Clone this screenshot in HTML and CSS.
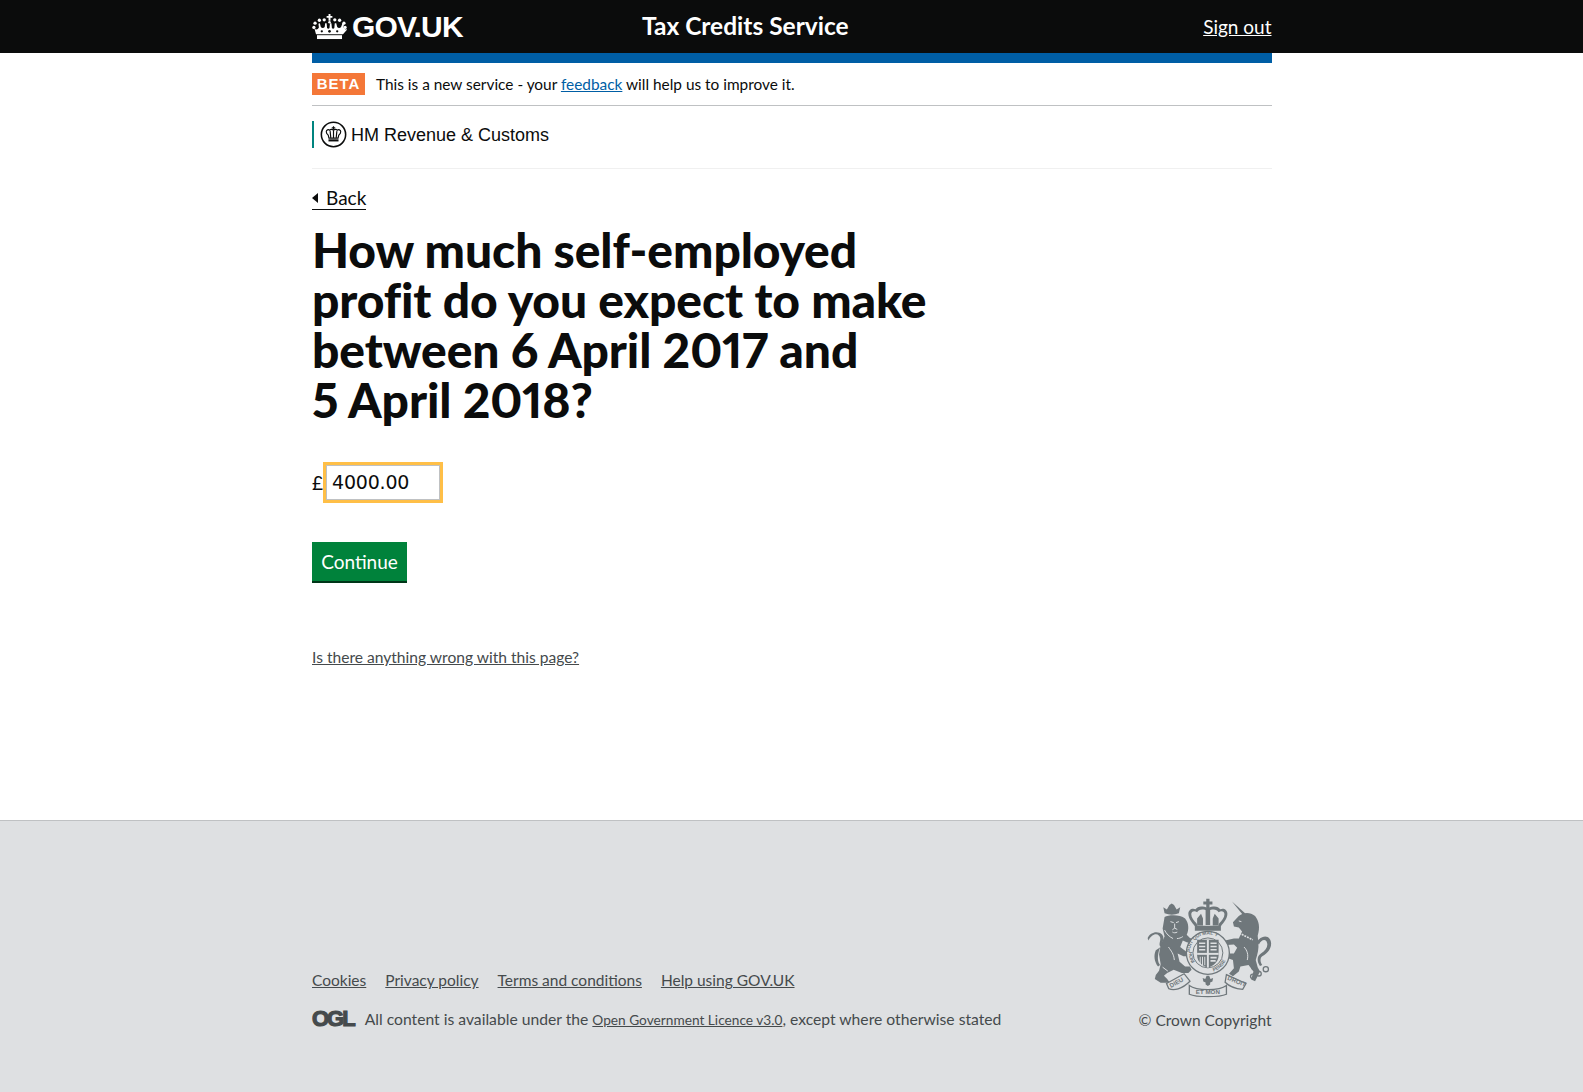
FILE: index.html
```html
<!DOCTYPE html>
<html lang="en">
<head>
  <meta charset="UTF-8">
  <title>Tax Credits Service - GOV.UK</title>
  <link rel="stylesheet" href="styles.css">
</head>
<body>
  <header class="top">
    <div class="wrap top-row">
      <a class="logo" href="#">
        <svg class="crown" viewBox="0 0 36 27" width="35" height="26" aria-hidden="true">
          <g fill="#fff">
            <path d="M17 0h2v2h2v2h-2v3h-2V4h-2V2h2z"/>
            <circle cx="18" cy="8.500" r="1.300"/>
            <circle cx="12.500" cy="6" r="1.700"/><circle cx="23.500" cy="6" r="1.700"/>
            <circle cx="7.500" cy="6.500" r="1.700"/><circle cx="28.500" cy="6.500" r="1.700"/>
            <circle cx="3" cy="9.500" r="1.700"/><circle cx="33" cy="9.500" r="1.700"/>
            <circle cx="1.800" cy="14" r="1.700"/><circle cx="34.200" cy="14" r="1.700"/>
            <path d="M2.500 15.500c2 1 3.500.5 4.500-1.500l-.5-4 1.500-.5 1 4c1 1.500 3 1.500 4 0l.5-4h1.500l.5 5c.5 1 2 1 2.500 0l.5-5H20l.5 5c.5 1 2 1 2.500 0l.5-5h1.500l1 4c1 1.500 3 1.500 4 0l1.500-4 1.500.5-.5 4c1 2 2.500 2.500 4.500 1.500L32 21H4z"/>
            <rect x="5" y="22" width="26" height="4"/>
          </g>
          <g fill="#0b0c0c">
            <circle cx="10" cy="18" r="1.200"/><circle cx="18" cy="18" r="1.400"/><circle cx="26" cy="18" r="1.200"/>
          </g>
        </svg>
        <span>GOV.UK</span>
      </a>
      <a class="service" href="#">Tax Credits Service</a>
      <a class="signout" href="#">Sign out</a>
    </div>
  </header>

  <div class="wrap">
    <div class="blue-bar"></div>
    <div class="beta">
      <span class="tag">BETA</span>
      <span>This is a new service - your <a href="#">feedback</a> will help us to improve it.</span>
    </div>
    <div class="dept">
      <div class="dept-inner">
        <svg viewBox="0 0 28 28" width="27" height="27" aria-hidden="true">
          <circle cx="14" cy="14" r="12.600" fill="#fff" stroke="#0b0c0c" stroke-width="1.600"/>
          <g fill="none" stroke="#0b0c0c" stroke-width="1.200">
            <path d="M14 9.500c-1.500-1.200-3-1-3.800 0-1.500-1-3.700-.3-3.700 1.600 0 1.500 1 2.700 2 3.600l.8 3h9.400l.8-3c1-.9 2-2.100 2-3.600 0-1.900-2.200-2.600-3.700-1.600-.8-1-2.300-1.200-3.800 0z"/>
            <path d="M14 9.500v8.200M10.500 10.500l.7 7M17.500 10.500l-.7 7"/>
          </g>
          <path fill="#0b0c0c" d="M13.400 5.400h1.200v1.200h1.200v1.100h-1.200v1.500h-1.200V7.700h-1.200V6.600h1.200z"/>
          <rect x="8.800" y="19" width="10.400" height="2.200" fill="#0b0c0c"/>
        </svg>
        <span class="dept-name">HM Revenue &amp; Customs</span>
      </div>
    </div>

    <main class="content">
      <a class="back" href="#">Back</a>
      <h1>How much self-employed<br>profit do you expect to make<br>between 6 April 2017 and<br>5 April 2018?</h1>
      <form class="amount">
        <label for="amount">£</label>
        <input id="amount" type="text" value="4000.00">
      </form>
      <button class="continue" type="button">Continue</button>
      <p class="report"><a href="#">Is there anything wrong with this page?</a></p>
    </main>
  </div>

  <footer class="foot">
    <div class="wrap foot-row">
      <div class="foot-left">
        <ul class="foot-links">
          <li><a href="#">Cookies</a></li>
          <li><a href="#">Privacy policy</a></li>
          <li><a href="#">Terms and conditions</a></li>
          <li><a href="#">Help using GOV.UK</a></li>
        </ul>
        <div class="licence">
          <span class="ogl">OGL</span>
          <span>All content is available under the <a class="small-link" href="#">Open Government Licence v3.0</a>, except where otherwise stated</span>
        </div>
      </div>
      <div class="foot-right">
        <svg class="crest" viewBox="18 0 384 306" width="125" height="102" aria-hidden="true">
          <defs>
            <path id="garter-top" d="M150 178A56 56 0 1 1 260 178"/>
            <path id="garter-left" d="M147 165A58 58 0 0 0 190 225"/>
            <path id="garter-right" d="M222 225A58 58 0 0 0 263 165"/>
          </defs>
          <g fill="#6f777b">
            <!-- lion -->
            <path d="M72 46L68 28l11 7 8-14 7-5 7 5 8 14 11-7-4 18q-22 9-44 0z"/>
            <path d="M72 58C85 50 120 50 135 62c11 13 13 33 5 50l10 10 15 6-5 12-20-5-12-5-8 20 20 15h10l-2 13h-18l-18-8 6 25 17 15h15l5 10-10 10h-20l-25-10-20 10-10 8 10 10 8 12H60l-18-12 3-12 10-13 5-20-5-30 5-30 12-25-6-25z"/>
            <path d="M60 150c-10-10 6-25-5-35-10-10-25 0-33 15l-2-8c8-17 30-24 45-10 10 13-5 33-10 48-5 20-5 35 3 45l-6 5c-12-15-14-35-7-50z"/>
            <g fill="none" stroke="#dee0e2" stroke-width="3">
              <path d="M90 72l10 3M116 72l-9 3M103 78v14l-7 5M103 92l8 4M96 104c4 3 10 3 15 0"/>
              <path d="M72 98c6 12 14 20 26 26M128 118c-6 4-12 6-18 6M84 150c8 12 16 20 18 40M66 212l16 12"/>
            </g>
            <!-- royal crown -->
            <path d="M200 2h10v8h9v9h-9v11h-10V19h-9v-9h9z"/>
            <path d="M205 30c20-8 32-5 38 4 11-5 22 2 22 14 0 15-12 28-20 38v14h-80V86c-8-10-20-23-20-38 0-12 11-19 22-14 6-9 18-12 38-4zm0 8c-18-6-27-4-33 5-9-6-18-2-18 6 0 10 8 20 16 28l3 8h64l3-8c8-8 16-18 16-28 0-8-9-12-18-6-6-9-15-11-33-5z"/>
            <path d="M198 34h14v48h-14zM172 62l12-14 6 14v22h-18zM238 62l-12-14-6 14v22h18z"/>
            <!-- unicorn -->
            <path d="M279 10l42 38-7 5z"/>
            <path d="M300 55c15-13 35-13 50 0 12 15 16 35 8 60l2 20c2 20-2 35-8 55l6 22 7 13-15 30-12-5 7-25-15-20-25 5-5 15-18 15-12-8 15-17-3-25-22-8-5-12h30l10-18-10-10-23 2-4-14 27-6h15l10-22-10-12-15-3-3-13z"/>
            <path d="M355 135c10-17 30-23 40-10 10 15 3 40-23 53-7 5-7 17 0 27l-7 3c-10-13-10-30 3-38 17-10 24-25 17-38-7-8-17-2-23 10z"/>
            <g fill="none" stroke="#6f777b" stroke-width="4">
              <circle cx="383" cy="218" r="8"/>
              <circle cx="362" cy="232" r="7"/>
              <circle cx="343" cy="240" r="7"/>
              <circle cx="346" cy="213" r="6"/>
            </g>
            <path d="M293 103l50 25" fill="none" stroke="#dee0e2" stroke-width="5" stroke-dasharray="6 3"/>
            <path d="M316 150c10 10 14 24 10 40M300 70l8 2" fill="none" stroke="#dee0e2" stroke-width="3"/>
            <!-- shield and garter -->
            <circle cx="205" cy="168" r="66" fill="#dee0e2" stroke="#6f777b" stroke-width="4"/>
            <circle cx="205" cy="168" r="46" fill="none" stroke="#6f777b" stroke-width="3"/>
            <path d="M172 128h66v48c0 20-18 33-33 37-15-4-33-17-33-37z"/>
            <g fill="#dee0e2">
              <rect x="202" y="128" width="6" height="85"/>
              <rect x="172" y="168" width="66" height="6"/>
              <path d="M178 136h19v5h-19zM178 146h19v5h-19zM178 156h19v5h-19zM213 136h19v5h-19zM213 146h19v5h-19zM213 156h19v5h-19zM213 180h19v5h-19zM213 190h16v5h-16z"/>
              <path d="M180 180h3v22h-3zM187 180h3v26h-3zM194 180h3v26h-3z"/>
            </g>
            <!-- motto scroll -->
            <g stroke="#6f777b" stroke-width="4" fill="#dee0e2">
              <path d="M78 262l54-30 18 23c-25 25-50 30-65 23z"/>
              <path d="M262 235l60 27-10 18c-22-2-42-10-54-22z"/>
              <path d="M148 268c22 17 92 17 114 0v27c-22 10-92 10-114 0z"/>
            </g>
            <path d="M201 238h8l4 10 8-3-2 11-7 3v6l-7 5-7-5v-6l-7-3-2-11 8 3z"/>
          </g>
          <text class="garter"><textPath href="#garter-top" startOffset="6%">SOIT QUI MAL Y</textPath></text>
          <text class="garter"><textPath href="#garter-left">HONI</textPath></text>
          <text class="garter"><textPath href="#garter-right">PENSE</textPath></text>
          <text x="92" y="276" class="motto" transform="rotate(-30 92 276)">DIEU</text>
          <text x="205" y="293" class="motto" text-anchor="middle">ET MON</text>
          <text x="264" y="250" class="motto" transform="rotate(22 264 250)">DROIT</text>
        </svg>
        <span class="copy">© Crown Copyright</span>
      </div>
    </div>
  </footer>
</body>
</html>
```

FILE: styles.css
```css
* { box-sizing: border-box; }
html, body { margin: 0; padding: 0; }
body { font-family: Lato, Arial, sans-serif; color: #0b0c0c; background: #fff; min-height: 1092px; display: flex; flex-direction: column; }
a { color: inherit; }
.wrap { width: 959.500px; margin-left: 312px; }

.top { background: #0b0c0c; color: #fff; height: 53px; flex: none; }
.top-row { display: flex; align-items: center; height: 53px; }
.logo { display: flex; align-items: center; gap: 5px; flex: 0 0 330px; text-decoration: none; font-family: "Liberation Sans", Arial, sans-serif; font-weight: 700; font-size: 30px; letter-spacing: -0.8px; }
.service { font-weight: 700; font-size: 24.500px; line-height: 51px; height: 53px; text-decoration: none; white-space: nowrap; }
.signout { font-size: 19px; margin-left: auto; white-space: nowrap; }

.blue-bar { height: 10px; background: #005ea5; }
.beta { display: flex; align-items: center; gap: 11px; height: 43px; font-size: 15.400px; border-bottom: 1px solid #bfc1c3; }
.beta a { color: #005ea5; }
.tag { background: #f47738; color: #fff; font-family: "Liberation Sans", Arial, sans-serif; font-weight: 700; font-size: 15px; letter-spacing: 1px; width: 53px; height: 22px; line-height: 22px; text-align: center; }
.dept { height: 63px; padding-top: 15px; border-bottom: 1px solid #f0f0f0; }
.dept-inner { display: flex; align-items: center; gap: 4px; height: 27px; padding-left: 6px; border-left: 2px solid #00847f; font-family: "Liberation Sans", Arial, sans-serif; font-size: 18px; }
.dept-name { padding-top: 2px; }

.content { padding-top: 18px; }
.back { display: inline-block; position: relative; padding-left: 14px; font-size: 19px; line-height: 22px; text-decoration: none; border-bottom: 1px solid #0b0c0c; height: 23px; }
.back::before { content: ""; position: absolute; left: 0; top: 6px; border-style: solid; border-width: 5px 6px 5px 0; border-color: transparent #0b0c0c transparent transparent; }
h1 { margin: 15px 0 0; font-size: 48px; line-height: 50px; font-weight: 900; letter-spacing: -0.1px; font-variant-numeric: proportional-nums; }
.amount { display: flex; align-items: center; margin-top: 37px; font-size: 19px; }
.amount label { width: 11px; }
.amount input { width: 120px; height: 41px; padding: 0 6px 2px; font-family: "DejaVu Sans", sans-serif; font-size: 19px; letter-spacing: -0.2px; color: #0b0c0c; border: 3px solid #ffbf47; outline: none; box-shadow: inset 0 0 0 1px #bfc1c3; }
.continue { display: block; margin-top: 39px; width: 95px; height: 41px; padding: 0; background: #00823b; color: #fff; border: 0; border-bottom: 2px solid #003618; font-family: inherit; font-size: 19px; }
.report { margin: 65px 0 0; font-size: 15.600px; color: #454a4c; }

.foot { margin-top: auto; height: 272px; flex: none; background: #dee0e2; border-top: 1px solid #bfc1c3; color: #454a4c; }
.foot-row { display: flex; justify-content: space-between; align-items: flex-end; height: 100%; padding-bottom: 63px; }
.foot-links { display: flex; gap: 19px; margin: 0 0 20px; padding: 0; list-style: none; font-size: 15.500px; }
.licence { display: flex; align-items: center; gap: 11px; font-size: 15.700px; }
.ogl { font-family: "Liberation Sans", Arial, sans-serif; font-weight: 700; font-size: 22px; line-height: 20px; letter-spacing: -2px; -webkit-text-stroke: 1.200px #454a4c; }
.small-link { font-size: 13.700px; }
.foot-right { display: flex; flex-direction: column; align-items: flex-end; gap: 12px; font-size: 15.500px; }
.crest { display: block; }
.garter { fill: #6f777b; font-family: "Liberation Sans", Arial, sans-serif; font-size: 15px; font-weight: 700; }
.motto { fill: #6f777b; font-family: "Liberation Sans", Arial, sans-serif; font-size: 19px; font-weight: 700; }
```
